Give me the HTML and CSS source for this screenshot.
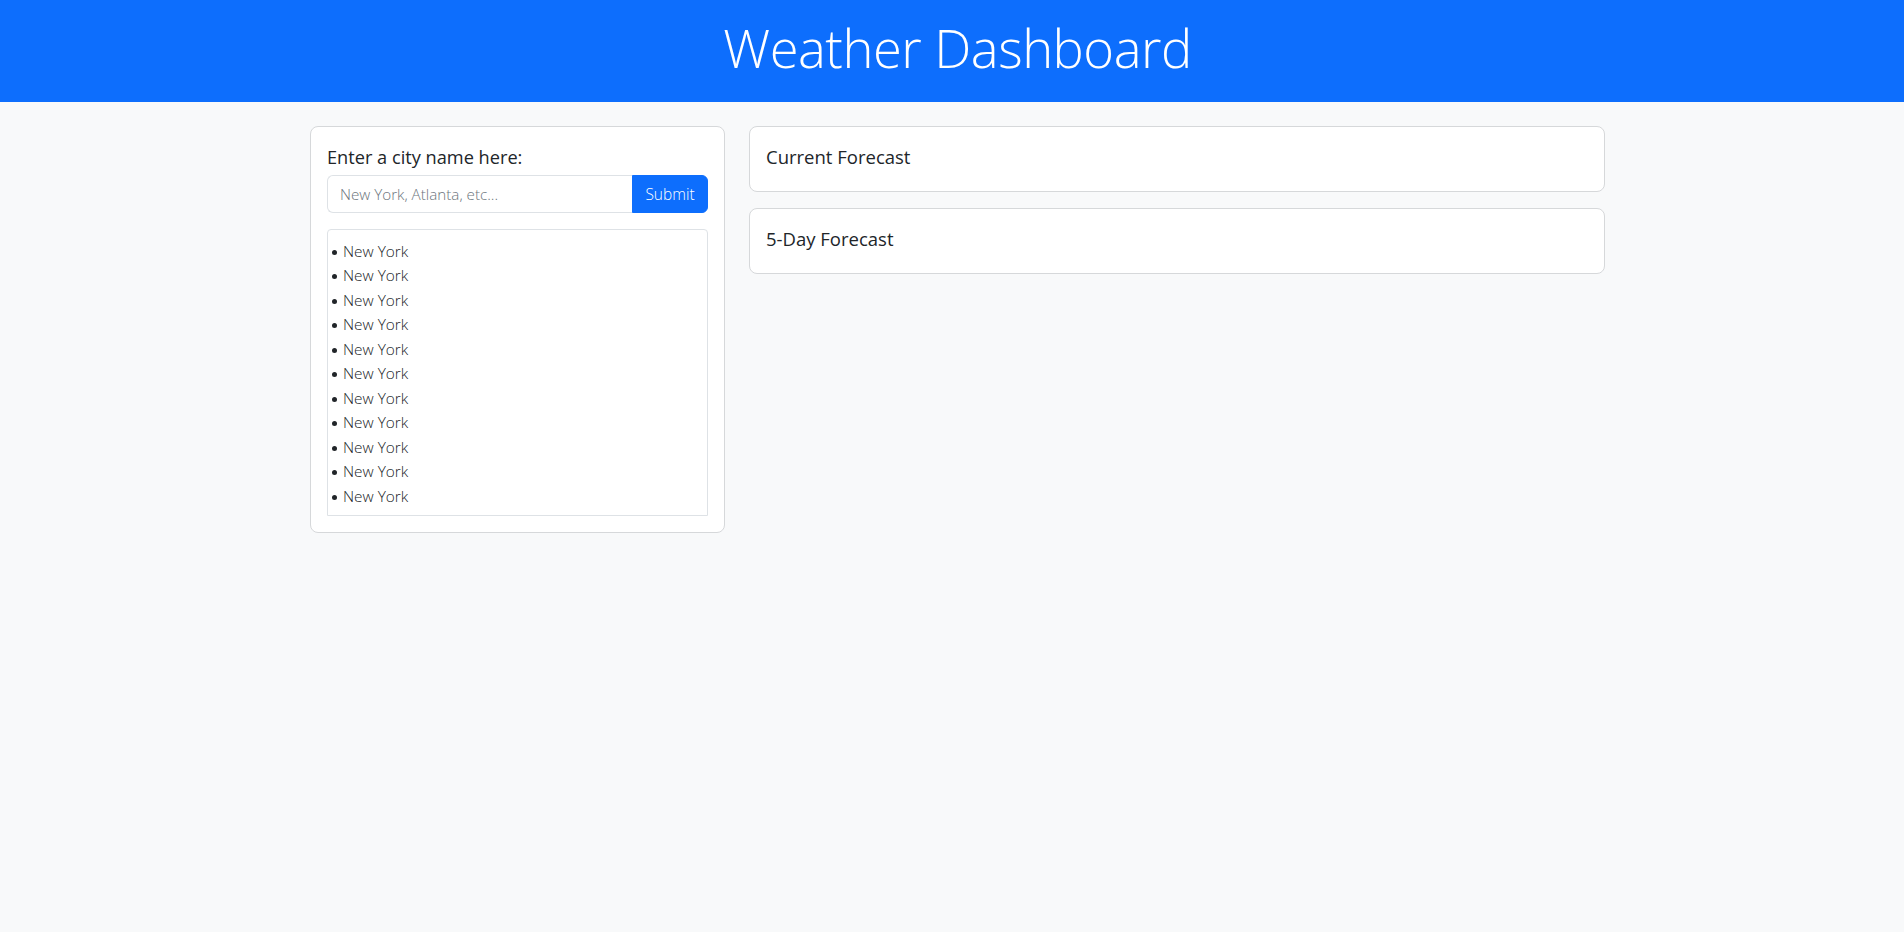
FILE: index.html
```html
<!DOCTYPE html>
<html lang="en">
<head>
<meta charset="utf-8">
<title>Weather Dashboard</title>
<link rel="stylesheet" href="styles.css">
</head>
<body>
<header class="hero">
  <h1 class="hero-title">Weather Dashboard</h1>
</header>
<main class="page">
  <div class="layout">
    <section class="card search-card">
      <label class="card-label" for="city">Enter a city name here:</label>
      <div class="input-group">
        <input id="city" class="city-input" type="text" placeholder="New York, Atlanta, etc...">
        <button class="submit-btn" type="button">Submit</button>
      </div>
      <div class="history">
        <ul class="history-list">
          <li>New York</li>
          <li>New York</li>
          <li>New York</li>
          <li>New York</li>
          <li>New York</li>
          <li>New York</li>
          <li>New York</li>
          <li>New York</li>
          <li>New York</li>
          <li>New York</li>
          <li>New York</li>
        </ul>
      </div>
    </section>
    <div class="forecast-col">
      <section class="card forecast-card">
        <h5 class="card-title">Current Forecast</h5>
      </section>
      <section class="card forecast-card">
        <h5 class="card-title">5-Day Forecast</h5>
      </section>
    </div>
  </div>
</main>
</body>
</html>
```
FILE: styles.css
```css
* { box-sizing: border-box; }
html, body { margin: 0; padding: 0; }
body {
  background: #f8f9fa;
  color: #212529;
  font-family: "Open Sans", "Noto Sans", sans-serif;
  font-size: 16px;
  line-height: 1.5;
  min-height: 932px;
}
.hero {
  background: #0d6efd;
  height: 102px;
  display: flex;
  align-items: center;
  justify-content: center;
  padding-left: 11px;
}
.hero-title {
  margin: 0;
  color: #fff;
  font-weight: 300;
  font-size: 52.5px;
  line-height: 1.2;
  letter-spacing: -0.5px;
  padding-bottom: 7px;
}
.page {
  padding: 24px 0 0 11px;
}
.layout {
  width: 1295px;
  margin: 0 auto;
  display: flex;
  gap: 24px;
  align-items: flex-start;
}
.card {
  background: #fff;
  border: 1px solid #d6d8da;
  border-radius: 8px;
  padding: 16px;
}
.search-card {
  width: 415px;
  flex: none;
}
.card-label {
  display: block;
  font-size: 18.2px;
  line-height: 25px;
  margin-top: 2px;
  margin-bottom: 5px;
  color: #212529;
}
.input-group {
  display: flex;
  height: 38px;
  margin-bottom: 16px;
}
.city-input {
  flex: 1;
  min-width: 0;
  border: 1px solid #dee2e6;
  border-right: none;
  border-radius: 6px 0 0 6px;
  padding: 6px 12px;
  font-family: inherit;
  font-size: 15.2px;
  color: #212529;
  background: #fff;
  outline: none;
}
.city-input::placeholder { color: #6c757d; opacity: 1; font-weight: 300; }
.submit-btn {
  width: 76px;
  flex: none;
  border: 1px solid #0d6efd;
  background: #0d6efd;
  color: #fff;
  border-radius: 0 6px 6px 0;
  font-family: inherit;
  font-size: 15.5px;
  font-weight: 300;
  padding: 0 10px;
}
.history {
  border: 1px solid #dee2e6;
  border-radius: 4px 4px 0 0;
  height: 287px;
  padding: 9.5px 0 5px;
}
.history-list {
  margin: 0;
  padding-left: 15px;
  list-style: none;
  font-size: 15.4px;
  line-height: 24.5px;
  font-weight: 300;
  color: #212529;
}
.history-list li {
  position: relative;
}
.history-list li::before {
  content: "";
  position: absolute;
  left: -11px;
  top: 10px;
  width: 5px;
  height: 5px;
  border-radius: 50%;
  background: #212529;
}
.forecast-col {
  width: 856px;
  flex: none;
  display: flex;
  flex-direction: column;
  gap: 16px;
}
.card-title {
  margin: 1px 0 6px;
  font-size: 18.5px;
  line-height: 25px;
  font-weight: 400;
  color: #212529;
}
```
